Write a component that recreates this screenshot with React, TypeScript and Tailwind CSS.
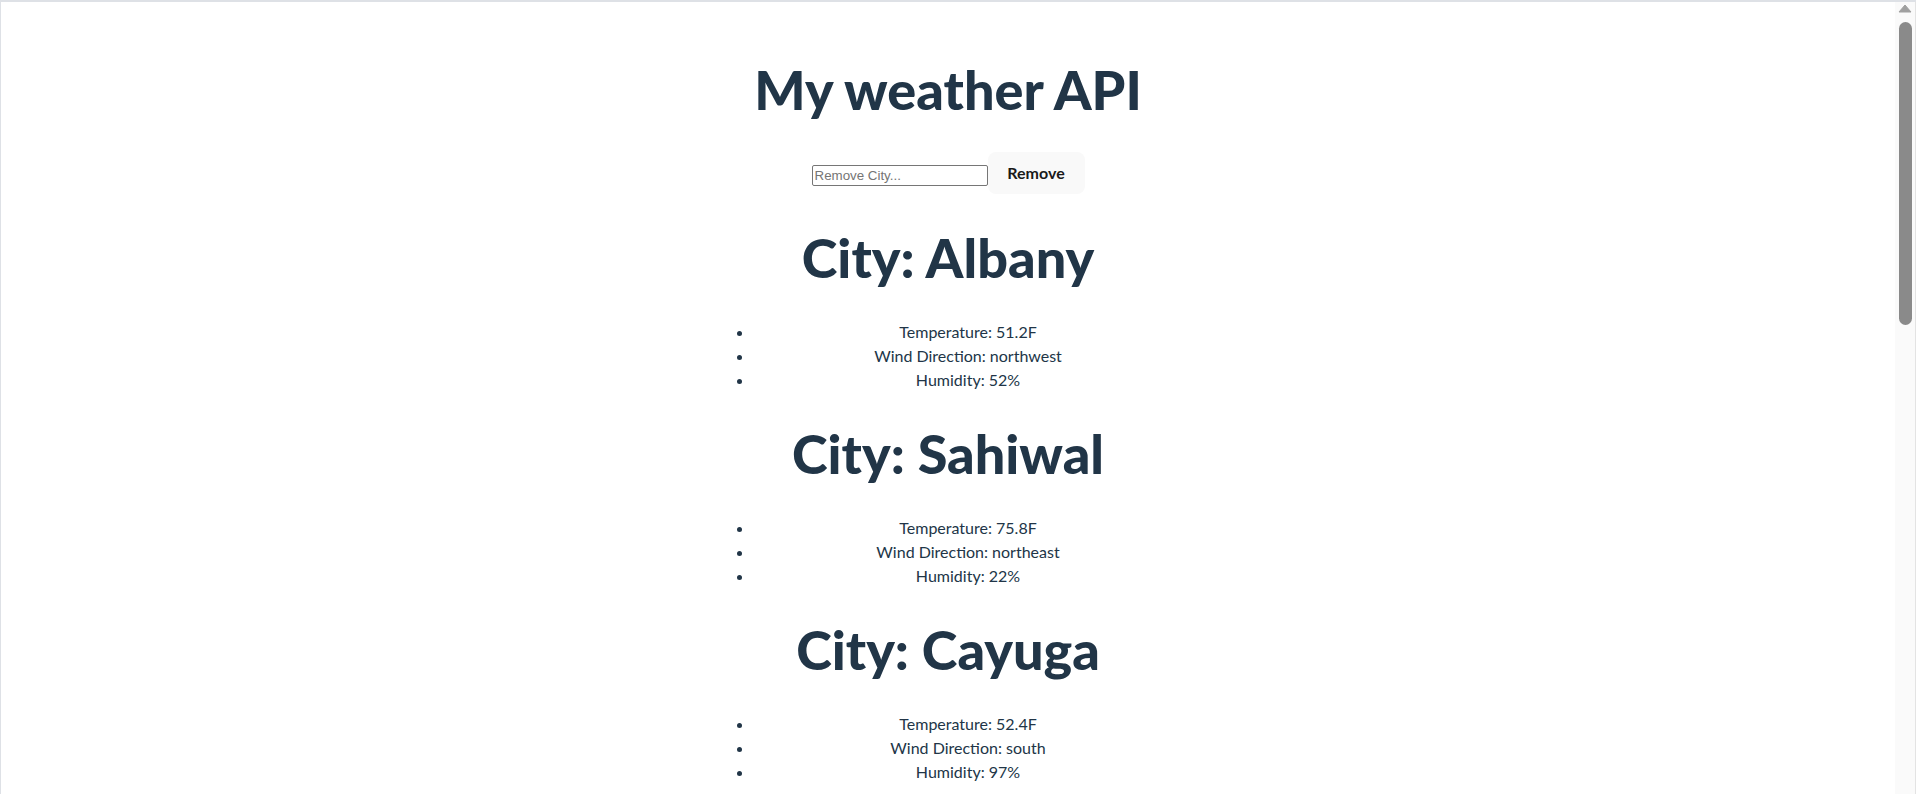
import React from 'react'

type City = { name: string; temp: string; wind: string; humidity: string }

const cities: City[] = [
  { name: 'Albany', temp: '51.2F', wind: 'northwest', humidity: '52%' },
  { name: 'Sahiwal', temp: '75.8F', wind: 'northeast', humidity: '22%' },
  { name: 'Cayuga', temp: '52.4F', wind: 'south', humidity: '97%' },
]

export default function App() {
  return (
    <div className="h-screen w-full flex border-t-2 border-l border-[#dee1e6] bg-white overflow-hidden">
      {/* page */}
      <main
        className="flex-1 overflow-hidden text-center text-[#213547]"
        style={{ fontFamily: 'Lato, "Open Sans", sans-serif' }}
      >
        <div className="w-[468px] mx-auto pt-[58px]">
          <h1 className="text-[54px] leading-[60px] font-black">My weather API</h1>

          <div className="flex justify-center items-start mt-[32px]">
            <input
              type="text"
              placeholder="Remove City..."
              className="w-[176px] h-[21px] mt-[13px] border border-[#767676] rounded-[2px] px-[2px] text-[13.33px] text-black placeholder:text-[#757575] outline-none"
              style={{ fontFamily: '"Liberation Sans", Arial, sans-serif' }}
            />
            <button
              type="button"
              className="w-[97px] h-[42px] rounded-[8px] bg-[#f9f9f9] text-[16px] font-bold text-[#1a1a1a]"
            >
              Remove
            </button>
          </div>

          <div className="pt-[2px]">
            {cities.map((c) => (
              <section key={c.name}>
                <h1 className="text-[54px] leading-[60px] font-black mt-[32px]">City: {c.name}</h1>
                <ul className="list-disc pl-10 mt-[32px] text-[16px] leading-[24px]">
                  <li>Temperature: {c.temp}</li>
                  <li>Wind Direction: {c.wind}</li>
                  <li>Humidity: {c.humidity}</li>
                </ul>
              </section>
            ))}
          </div>
        </div>
      </main>

      {/* scrollbar */}
      <div className="w-[21px] shrink-0 bg-[#fafafa] border-r border-[#e3e3e3] flex flex-col items-center">
        <svg width="14" height="9" viewBox="0 0 14 9" className="mt-[2px]">
          <path d="M7 1 L13 8 L1 8 Z" fill="#a0a0a0" stroke="#a0a0a0" strokeLinejoin="round" />
        </svg>
        <div className="w-[13px] h-[303px] mt-[9px] rounded-full bg-[#8a8a8a]" />
      </div>
    </div>
  )
}
